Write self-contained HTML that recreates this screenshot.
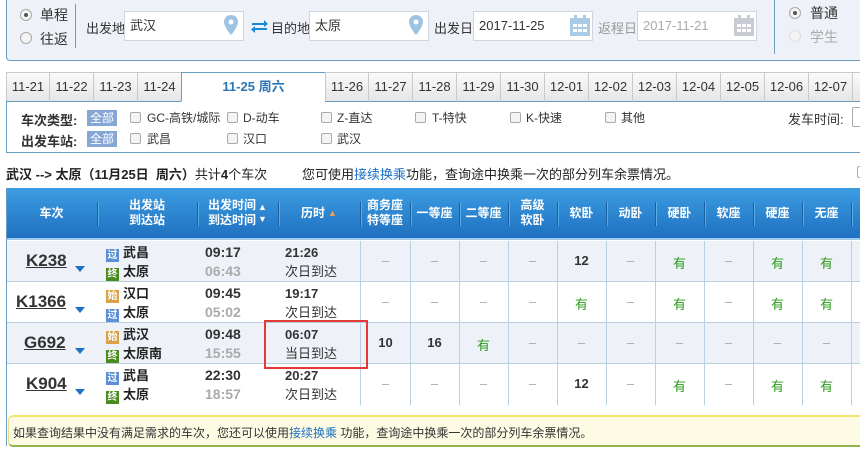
<!DOCTYPE html>
<html><head><meta charset="utf-8"><style>
*{margin:0;padding:0;box-sizing:border-box}
body{width:860px;height:456px;overflow:hidden;background:#fff;font-family:"Liberation Sans","Noto Sans CJK SC",sans-serif;font-size:12px;color:#333;position:relative}
.a{position:absolute}
.top{left:6px;top:-2px;width:860px;height:63px;background:#eef1f8;border:1px solid #6a9dc0;border-top:none;border-radius:0 0 0 4px}
.inp{position:absolute;height:30px;background:#fff;border:1px solid #cfd6e0;font-size:13px;line-height:28px;padding-left:5px}
.rad{position:absolute;width:12px;height:12px;border-radius:50%;border:1px solid #aaa;background:#f4f4f4}
.rad.on::after{content:"";position:absolute;left:3px;top:3px;width:4px;height:4px;border-radius:50%;background:#555}
.tab{position:absolute;top:72px;height:30px;background:linear-gradient(#fafafa,#e6e6e6);border:1px solid #c9c9c9;border-bottom:1px solid #6a9dc0;text-align:center;line-height:28px;font-size:13px;color:#333}
.filter{left:6px;top:101px;width:860px;height:52px;border:1px solid #6a9dc0;border-right:none;border-top:none}
.cb{position:absolute;width:11px;height:11px;border:1px solid #aaa;border-radius:2px;background:#f4f4f4}
.all{position:absolute;background:#86a7d6;color:#fff;font-size:12px;padding:0 3px;height:16px;line-height:16px}
.hd{left:6px;top:188px;width:860px;height:52px;background:linear-gradient(#3d9de2,#1f70c0);border-bottom:2px solid #9cc9ec}
.hc{position:absolute;top:0;height:50px;color:#fff;font-weight:bold;font-size:12px;text-align:center;display:flex;align-items:center;justify-content:center;line-height:15px}
.sep{position:absolute;top:14px;width:1px;height:24px;background:#1a5f9f;box-shadow:1px 0 0 #5aaee8}
.row{position:absolute;left:6px;width:860px;height:41px;border-bottom:1px solid #b7d0e0}
.vl{position:absolute;width:1px;background:#b9d2e2}
.c{position:absolute;text-align:center;width:49px;font-size:13px}
.dash{color:#aaa}
.g{color:#2a9b1a;font-size:13px}
.n{font-weight:bold;font-size:13px;color:#333}
.tn{position:absolute;left:20px;font-size:17px;font-weight:bold;color:#333;text-decoration:underline;}
.arr{position:absolute;left:72px;width:0;height:0;border-left:5px solid transparent;border-right:5px solid transparent;border-top:6px solid #1e72c2}
.ic{display:inline-block;width:13px;height:13px;color:#fff;font-size:10px;line-height:13px;text-align:center;margin-right:4px;vertical-align:-1px}
.st{position:absolute;left:101px;font-weight:bold;font-size:13px;line-height:19px;color:#222}
.tm{position:absolute;left:205px;font-weight:bold;font-size:14px;line-height:19px}
.du{position:absolute;left:285px;font-size:13px;line-height:19px}
</style></head><body>
<div class="a top"></div>
<div class="rad on" style="left:20px;top:9px"></div><div class="a" style="left:40px;top:5px;font-size:14px">单程</div>
<div class="rad" style="left:20px;top:32px"></div><div class="a" style="left:40px;top:29px;font-size:14px">往返</div>
<div class="a" style="left:75px;top:4px;width:1px;height:44px;background:#6a9dc0"></div>
<div class="a" style="left:86px;top:18px;font-size:13px">出发地</div>
<div class="inp" style="left:124px;top:11px;width:120px">武汉</div>
<svg class="a" style="left:224px;top:15px" width="14" height="20" viewBox="0 0 14 20"><path d="M7 0C3 0 0 3 0 7c0 5 7 13 7 13s7-8 7-13C14 3 11 0 7 0z" fill="#9cc3e2"/><circle cx="7" cy="7" r="2.5" fill="#fff"/></svg>
<svg class="a" style="left:250px;top:18px" width="19" height="15" viewBox="0 0 19 15"><path d="M2 5h12V2l4 4-4 3V7H2z M17 10H5V8l-4 3.5L5 15v-3h12z" fill="#1b8ad6"/></svg>
<div class="a" style="left:271px;top:18px;font-size:13px">目的地</div>
<div class="inp" style="left:309px;top:11px;width:120px">太原</div>
<svg class="a" style="left:409px;top:15px" width="14" height="20" viewBox="0 0 14 20"><path d="M7 0C3 0 0 3 0 7c0 5 7 13 7 13s7-8 7-13C14 3 11 0 7 0z" fill="#9cc3e2"/><circle cx="7" cy="7" r="2.5" fill="#fff"/></svg>
<div class="a" style="left:434px;top:18px;font-size:13px">出发日</div>
<div class="inp" style="left:473px;top:11px;width:120px">2017-11-25</div>
<svg class="a" style="left:570px;top:15px" width="20" height="21" viewBox="0 0 20 21"><rect x="0" y="3" width="20" height="18" fill="#a9cbe6"/><rect x="4" y="0" width="3" height="5" fill="#a9cbe6"/><rect x="13" y="0" width="3" height="5" fill="#a9cbe6"/><g fill="#fff"><rect x="3" y="9" width="4" height="3"/><rect x="8" y="9" width="4" height="3"/><rect x="13" y="9" width="4" height="3"/><rect x="3" y="14" width="4" height="3"/><rect x="8" y="14" width="4" height="3"/><rect x="13" y="14" width="4" height="3"/></g></svg>
<div class="a" style="left:598px;top:18px;font-size:13px;color:#999">返程日</div>
<div class="inp" style="left:637px;top:11px;width:120px;color:#aaa">2017-11-21</div>
<svg class="a" style="left:734px;top:15px" width="20" height="21" viewBox="0 0 20 21"><rect x="0" y="3" width="20" height="18" fill="#c8cbd3"/><rect x="4" y="0" width="3" height="5" fill="#c8cbd3"/><rect x="13" y="0" width="3" height="5" fill="#c8cbd3"/><g fill="#fff"><rect x="3" y="9" width="4" height="3"/><rect x="8" y="9" width="4" height="3"/><rect x="13" y="9" width="4" height="3"/><rect x="3" y="14" width="4" height="3"/><rect x="8" y="14" width="4" height="3"/><rect x="13" y="14" width="4" height="3"/></g></svg>
<div class="a" style="left:774px;top:0;width:1px;height:54px;background:#6a9dc0"></div>
<div class="rad on" style="left:789px;top:7px"></div><div class="a" style="left:810px;top:3px;font-size:14px">普通</div>
<div class="rad" style="left:789px;top:30px;border-color:#ddd"></div><div class="a" style="left:810px;top:27px;font-size:14px;color:#aaa">学生</div>

<div class="tab" style="left:6px;width:44px">11-21</div>
<div class="tab" style="left:49px;width:45px">11-22</div>
<div class="tab" style="left:93px;width:45px">11-23</div>
<div class="tab" style="left:137px;width:45px">11-24</div>
<div class="tab" style="left:181px;width:145px;background:#fff;border-color:#6a9dc0;border-bottom-color:#fff;color:#2a75b6;font-weight:bold">11-25 周六</div>
<div class="tab" style="left:325px;width:44px">11-26</div>
<div class="tab" style="left:368px;width:45px">11-27</div>
<div class="tab" style="left:412px;width:45px">11-28</div>
<div class="tab" style="left:456px;width:45px">11-29</div>
<div class="tab" style="left:500px;width:45px">11-30</div>
<div class="tab" style="left:544px;width:45px">12-01</div>
<div class="tab" style="left:588px;width:45px">12-02</div>
<div class="tab" style="left:632px;width:45px">12-03</div>
<div class="tab" style="left:676px;width:45px">12-04</div>
<div class="tab" style="left:720px;width:45px">12-05</div>
<div class="tab" style="left:764px;width:45px">12-06</div>
<div class="tab" style="left:808px;width:45px">12-07</div>
<div class="tab" style="left:852px;width:45px"></div>

<div class="a filter"></div>
<div class="a" style="left:21px;top:110px;font-weight:bold;font-size:13px">车次类型:</div>
<div class="all" style="left:87px;top:110px">全部</div>
<div class="cb" style="left:130px;top:112px"></div><div class="a" style="left:147px;top:109px;font-size:12px">GC-高铁/城际</div>
<div class="cb" style="left:227px;top:112px"></div><div class="a" style="left:243px;top:109px">D-动车</div>
<div class="cb" style="left:321px;top:112px"></div><div class="a" style="left:337px;top:109px">Z-直达</div>
<div class="cb" style="left:415px;top:112px"></div><div class="a" style="left:432px;top:109px">T-特快</div>
<div class="cb" style="left:510px;top:112px"></div><div class="a" style="left:526px;top:109px">K-快速</div>
<div class="cb" style="left:605px;top:112px"></div><div class="a" style="left:621px;top:109px">其他</div>
<div class="a" style="left:788px;top:109px;font-size:13px">发车时间:</div>
<div class="a" style="left:852px;top:107px;width:20px;height:20px;border:1px solid #aaa;border-radius:2px;background:#fff"></div>
<div class="a" style="left:21px;top:131px;font-weight:bold;font-size:13px">出发车站:</div>
<div class="all" style="left:87px;top:131px">全部</div>
<div class="cb" style="left:130px;top:133px"></div><div class="a" style="left:147px;top:130px">武昌</div>
<div class="cb" style="left:227px;top:133px"></div><div class="a" style="left:243px;top:130px">汉口</div>
<div class="cb" style="left:321px;top:133px"></div><div class="a" style="left:337px;top:130px">武汉</div>

<div class="a" style="left:6px;top:164px;font-size:13px;color:#222"><b>武汉 --&gt; 太原（11月25日&nbsp; 周六）</b>共计<b>4</b>个车次</div>
<div class="a" style="left:302px;top:164px;font-size:13px;color:#222">您可使用<span style="color:#1a6fc4">接续换乘</span>功能，查询途中换乘一次的部分列车余票情况。</div>
<div class="a" style="left:857px;top:166px;width:10px;height:12px;border:1px solid #aaa;border-radius:2px"></div>

<div class="a hd"></div>
<div class="a" style="left:6px;top:188px;width:860px;height:52px">
<div class="hc" style="left:0;width:91px">车次</div><div class="sep" style="left:91px"></div>
<div class="hc" style="left:91px;width:100px">出发站<br>到达站</div><div class="sep" style="left:191px"></div>
<div class="hc" style="left:191px;width:81px">出发时间<br>到达时间<span style="font-size:9px;line-height:12px;margin-left:2px">▲<br>▼</span></div><div class="sep" style="left:272px"></div>
<div class="hc" style="left:272px;width:82px">历时 <span style="color:#f7a04a;font-size:9px;margin-left:3px">▲</span></div><div class="sep" style="left:354px"></div>
<div class="hc" style="left:354px;width:50px">商务座<br>特等座</div><div class="sep" style="left:404px"></div>
<div class="hc" style="left:404px;width:49px">一等座</div><div class="sep" style="left:453px"></div>
<div class="hc" style="left:453px;width:49px">二等座</div><div class="sep" style="left:502px"></div>
<div class="hc" style="left:502px;width:49px">高级<br>软卧</div><div class="sep" style="left:551px"></div>
<div class="hc" style="left:551px;width:49px">软卧</div><div class="sep" style="left:600px"></div>
<div class="hc" style="left:600px;width:49px">动卧</div><div class="sep" style="left:649px"></div>
<div class="hc" style="left:649px;width:49px">硬卧</div><div class="sep" style="left:698px"></div>
<div class="hc" style="left:698px;width:49px">软座</div><div class="sep" style="left:747px"></div>
<div class="hc" style="left:747px;width:49px">硬座</div><div class="sep" style="left:796px"></div>
<div class="hc" style="left:796px;width:49px">无座</div><div class="sep" style="left:845px"></div>
</div>

<div class="row" style="top:241px;background:#eef1f8"></div>
<div class="row" style="top:282px;background:#fff"></div>
<div class="row" style="top:323px;background:#eef1f8"></div>
<div class="row" style="top:364px;background:#fff;border-bottom:none"></div>
<div class="a" style="left:6px;top:188px;width:1px;height:258px;background:#6a9dc0"></div>
<div class="vl" style="left:360px;top:241px;height:164px"></div>
<div class="vl" style="left:410px;top:241px;height:164px"></div>
<div class="vl" style="left:459px;top:241px;height:164px"></div>
<div class="vl" style="left:508px;top:241px;height:164px"></div>
<div class="vl" style="left:557px;top:241px;height:164px"></div>
<div class="vl" style="left:606px;top:241px;height:164px"></div>
<div class="vl" style="left:655px;top:241px;height:164px"></div>
<div class="vl" style="left:704px;top:241px;height:164px"></div>
<div class="vl" style="left:753px;top:241px;height:164px"></div>
<div class="vl" style="left:802px;top:241px;height:164px"></div>
<div class="vl" style="left:851px;top:241px;height:164px"></div>

<div class="tn" style="top:251px;left:26px">K238</div><div class="arr" style="top:266px;left:75px"></div>
<div class="st" style="top:243px;left:106px"><span class="ic" style="background:#5b8fd6">过</span>武昌<br><span class="ic" style="background:#4a8a1e">终</span>太原</div>
<div class="tm" style="top:243px;color:#333">09:17<br><span style="color:#aaa">06:43</span></div>
<div class="du" style="top:243px"><b>21:26</b><br>次日到达</div>
<div class="tn" style="top:292px;left:16px">K1366</div><div class="arr" style="top:307px;left:75px"></div>
<div class="st" style="top:284px;left:106px"><span class="ic" style="background:#d9a24a">始</span>汉口<br><span class="ic" style="background:#5b8fd6">过</span>太原</div>
<div class="tm" style="top:284px;color:#333">09:45<br><span style="color:#aaa">05:02</span></div>
<div class="du" style="top:284px"><b>19:17</b><br>次日到达</div>
<div class="tn" style="top:333px;left:24px">G692</div><div class="arr" style="top:348px;left:75px"></div>
<div class="st" style="top:325px;left:106px"><span class="ic" style="background:#d9a24a">始</span>武汉<br><span class="ic" style="background:#4a8a1e">终</span>太原南</div>
<div class="tm" style="top:325px;color:#333">09:48<br><span style="color:#aaa">15:55</span></div>
<div class="du" style="top:325px"><b>06:07</b><br>当日到达</div>
<div class="tn" style="top:374px;left:26px">K904</div><div class="arr" style="top:389px;left:75px"></div>
<div class="st" style="top:366px;left:106px"><span class="ic" style="background:#5b8fd6">过</span>武昌<br><span class="ic" style="background:#4a8a1e">终</span>太原</div>
<div class="tm" style="top:366px;color:#333">22:30<br><span style="color:#aaa">18:57</span></div>
<div class="du" style="top:366px"><b>20:27</b><br>次日到达</div>

<div class="a" style="left:264px;top:320px;width:104px;height:49px;border:2px solid #e53935"></div>

<div class="a" style="left:0;top:253px;width:860px">
<span class="c dash" style="left:361px">–</span><span class="c dash" style="left:410px">–</span><span class="c dash" style="left:459px">–</span><span class="c dash" style="left:508px">–</span><span class="c n" style="left:557px">12</span><span class="c dash" style="left:606px">–</span><span class="c g" style="left:655px">有</span><span class="c dash" style="left:704px">–</span><span class="c g" style="left:753px">有</span><span class="c g" style="left:802px">有</span>
</div>
<div class="a" style="left:0;top:294px;width:860px">
<span class="c dash" style="left:361px">–</span><span class="c dash" style="left:410px">–</span><span class="c dash" style="left:459px">–</span><span class="c dash" style="left:508px">–</span><span class="c g" style="left:557px">有</span><span class="c dash" style="left:606px">–</span><span class="c g" style="left:655px">有</span><span class="c dash" style="left:704px">–</span><span class="c g" style="left:753px">有</span><span class="c g" style="left:802px">有</span>
</div>
<div class="a" style="left:0;top:335px;width:860px">
<span class="c n" style="left:361px">10</span><span class="c n" style="left:410px">16</span><span class="c g" style="left:459px">有</span><span class="c dash" style="left:508px">–</span><span class="c dash" style="left:557px">–</span><span class="c dash" style="left:606px">–</span><span class="c dash" style="left:655px">–</span><span class="c dash" style="left:704px">–</span><span class="c dash" style="left:753px">–</span><span class="c dash" style="left:802px">–</span>
</div>
<div class="a" style="left:0;top:376px;width:860px">
<span class="c dash" style="left:361px">–</span><span class="c dash" style="left:410px">–</span><span class="c dash" style="left:459px">–</span><span class="c dash" style="left:508px">–</span><span class="c n" style="left:557px">12</span><span class="c dash" style="left:606px">–</span><span class="c g" style="left:655px">有</span><span class="c dash" style="left:704px">–</span><span class="c g" style="left:753px">有</span><span class="c g" style="left:802px">有</span>
</div>

<div class="a" style="left:8px;top:415px;width:860px;height:32px;background:#fdfbe4;border:1px solid #e8e08a;border-top:2px solid #f3e56a;border-bottom:2px solid #8fb54e;border-radius:5px 0 0 5px"></div>
<div class="a" style="left:13px;top:424px;font-size:12px;color:#333">如果查询结果中没有满足需求的车次，您还可以使用<span style="color:#1a6fc4">接续换乘</span> 功能，查询途中换乘一次的部分列车余票情况。</div>
</body></html>
